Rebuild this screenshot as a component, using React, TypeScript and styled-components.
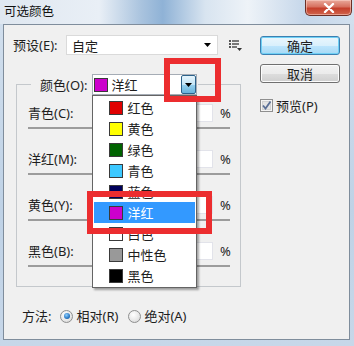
import React from 'react';
import styled, { createGlobalStyle } from 'styled-components';

const GlobalStyle = createGlobalStyle`
    html, body {
        margin: 0;
        padding: 0;
        width: 354px;
        height: 346px;
        overflow: hidden;
    }
    body {
        font-family: "Noto Sans", "Noto Sans CJK SC", sans-serif;
        font-size: 13px;
        color: #1e1e1e;
    }
`;

const Window = styled.div`
    width: 354px;
    height: 346px;
    display: flex;
    flex-direction: column;
    background: linear-gradient(180deg, #d3e0ee 0%, #bfd2e6 60%, #c7d7e9 100%);
`;

const TitleBar = styled.div`
    height: 24px;
    display: flex;
    align-items: flex-start;
    background: linear-gradient(90deg, #dfe7f0 0%, #e9eff6 28%, #a9c3de 40%, #8fb2d6 46%, #d8e4f0 58%, #eef3f8 70%, #c6d7ea 86%, #d2e0ee 100%);
`;

const Title = styled.span`
    padding-left: 4px;
    line-height: 24px;
    font-size: 12.5px;
    color: #111;
`;

const CloseButton = styled.div`
    margin-left: auto;
    margin-right: 2px;
    width: 47px;
    height: 16px;
    box-sizing: border-box;
    border: 1px solid #6b2f26;
    border-top: none;
    border-radius: 0 0 5px 5px;
    background: linear-gradient(180deg, #e9a99b 0%, #d7715f 45%, #c53f2b 55%, #d0644c 100%);
    box-shadow: inset 0 0 0 1px rgba(255, 220, 210, 0.5);
    display: flex;
    align-items: center;
    justify-content: center;
`;

const Client = styled.div`
    flex: 1;
    margin: 0 4px 6px 3px;
    border: 1px solid #7f8d9c;
    background: #f0f0f0;
    display: flex;
    flex-direction: column;
`;

const Body = styled.div`
    display: flex;
`;

const Main = styled.div`
    width: 246px;
    display: flex;
    flex-direction: column;
`;

const Side = styled.div`
    margin-left: 10px;
    padding-top: 11px;
    display: flex;
    flex-direction: column;
`;

const PresetRow = styled.div`
    margin-top: 10px;
    height: 20px;
    padding-left: 9px;
    display: flex;
    align-items: center;
`;

const Label = styled.span<{ $w?: number }>`
    width: ${(p) => (p.$w ? `${p.$w}px` : 'auto')};
    flex-shrink: 0;
    white-space: nowrap;
    line-height: 20px;
`;

const PresetCombo = styled.div`
    width: 152px;
    height: 20px;
    box-sizing: border-box;
    border: 1px solid #dadada;
    background: #fff;
    display: flex;
    align-items: center;
    padding: 0 6px 0 5px;
`;

const ComboText = styled.span`
    flex: 1;
    white-space: nowrap;
`;

const MenuIcon = styled.div`
    margin-left: 11px;
    width: 13px;
    height: 11px;
    display: flex;
`;

const GroupBox = styled.fieldset`
    margin: 19px 0 0 12px;
    width: 225px;
    box-sizing: border-box;
    min-inline-size: 0;
    border: 1px solid #c4c8cc;
    padding: 8px 10px 19px 11px;
    display: flex;
    flex-direction: column;
    gap: 20px;
`;

const Legend = styled.legend`
    margin-left: 3px;
    padding: 0 1px 0 9px;
    height: 21px;
`;

const LegendInner = styled.div`
    display: flex;
    align-items: center;
    height: 21px;
`;

const ColorCombo = styled.div`
    position: relative;
    margin-left: 5px;
    width: 105px;
    height: 21px;
    box-sizing: border-box;
    border: 1px solid #a5acb5;
    background: #fff;
    display: flex;
    align-items: center;
    padding-left: 1px;
`;

const Swatch = styled.span<{ $color: string; $size?: number }>`
    width: ${(p) => p.$size ?? 14}px;
    height: ${(p) => p.$size ?? 14}px;
    box-sizing: border-box;
    flex-shrink: 0;
    background: ${(p) => p.$color};
    border: 1px solid #3a3a3a;
`;

const ComboValue = styled.span`
    margin-left: 3px;
    flex: 1;
    white-space: nowrap;
`;

const DropButton = styled.div`
    width: 15px;
    height: 19px;
    box-sizing: border-box;
    border: 1px solid #2c628b;
    border-radius: 2px;
    background: linear-gradient(180deg, #e5f4fc 0%, #c4e5f6 50%, #98d1ef 51%, #68b3db 100%);
    display: flex;
    align-items: center;
    justify-content: center;
`;

const DropList = styled.ul`
    position: absolute;
    left: -1px;
    top: 20px;
    width: 105px;
    box-sizing: border-box;
    margin: 0;
    padding: 1px 0 1px;
    list-style: none;
    background: #fff;
    border: 1px solid #646464;
    box-shadow: 2px 2px 2px rgba(0, 0, 0, 0.35);
    z-index: 2;
`;

const DropItem = styled.li<{ $active?: boolean }>`
    height: 21px;
    margin: 0 1px;
    padding-left: 15px;
    display: flex;
    align-items: center;
    gap: 4px;
    background: ${(p) => (p.$active ? '#3399ff' : 'transparent')};
    color: ${(p) => (p.$active ? '#fff' : '#1e1e1e')};
`;

const Marker = styled.div<{ $x: number; $y: number; $w: number; $h: number }>`
    position: absolute;
    left: ${(p) => p.$x}px;
    top: ${(p) => p.$y}px;
    width: ${(p) => p.$w}px;
    height: ${(p) => p.$h}px;
    box-sizing: border-box;
    border: 6px solid #ec2d2f;
    z-index: 3;
`;

const SliderRow = styled.div`
    display: flex;
    flex-direction: column;
`;

const SliderTop = styled.div`
    height: 20px;
    display: flex;
    align-items: center;
`;

const ValueBox = styled.div`
    width: 30px;
    height: 18px;
    box-sizing: border-box;
    border: 1px solid #e2e3ea;
    background: #fff;
`;

const Percent = styled.span`
    margin-left: 7px;
    width: 10px;
    text-align: right;
`;

const Track = styled.div`
    margin-top: 4px;
    height: 2px;
    background: #9c9c9c;
`;

const Button = styled.div<{ $default?: boolean }>`
    width: 80px;
    height: 19px;
    box-sizing: border-box;
    border-radius: 3px;
    display: flex;
    align-items: center;
    justify-content: center;
    border: 1px solid ${(p) => (p.$default ? '#3c7fb1' : '#707070')};
    background: ${(p) =>
        p.$default
            ? 'linear-gradient(180deg, #eaf6fd 0%, #d9f0fc 50%, #bee6fd 51%, #a7d9f5 100%)'
            : 'linear-gradient(180deg, #f2f2f2 0%, #ebebeb 50%, #dddddd 51%, #cfcfcf 100%)'};
    box-shadow: inset 0 0 0 1px ${(p) => (p.$default ? '#6fd0f5' : '#fcfcfc')};
    & + & {
        margin-top: 9px;
    }
`;

const CheckRow = styled.div`
    margin-top: 15px;
    height: 15px;
    display: flex;
    align-items: center;
    gap: 3px;
`;

const MethodRow = styled.div`
    margin-top: 19px;
    height: 20px;
    padding-left: 18px;
    display: flex;
    align-items: center;
`;

const Radio = styled.span<{ $checked?: boolean }>`
    width: 13px;
    height: 13px;
    box-sizing: border-box;
    border-radius: 50%;
    border: 1px solid #8e8f8f;
    background: radial-gradient(circle at 40% 35%, #ffffff 0%, #e6e6e6 60%, #cfcfcf 100%);
    display: inline-flex;
    align-items: center;
    justify-content: center;
    margin-left: ${(p) => (p.$checked ? 9 : 10)}px;
    margin-right: 3px;
    &::after {
        content: '';
        display: ${(p) => (p.$checked ? 'block' : 'none')};
        width: 6px;
        height: 6px;
        border-radius: 50%;
        background: radial-gradient(circle at 40% 35%, #8fd0ff 0%, #2a78c4 60%, #17466f 100%);
    }
`;

const CheckBox = () => (
    <svg width='13' height='13' viewBox='0 0 13 13'>
        <rect x='0.5' y='0.5' width='12' height='12' fill='#f4f4f4' stroke='#8f8f8f' />
        <rect x='2.5' y='2.5' width='8' height='8' fill='#e4e4e4' stroke='#d2d2d2' />
        <path d='M3 6.5 L5.5 9.5 L10.5 2.5' fill='none' stroke='#5a6f96' strokeWidth='1.8' />
    </svg>
);

const Arrow = () => (
    <svg width='7' height='4' viewBox='0 0 7 4'>
        <path d='M0 0 H7 L3.5 4 Z' fill='#000' />
    </svg>
);

const colors = [
    { name: '红色', color: '#e00000' },
    { name: '黄色', color: '#ffff00' },
    { name: '绿色', color: '#006300' },
    { name: '青色', color: '#3cc8ff' },
    { name: '蓝色', color: '#00005a' },
    { name: '洋红', color: '#cc00cc' },
    { name: '白色', color: '#ffffff' },
    { name: '中性色', color: '#999999' },
    { name: '黑色', color: '#000000' },
];

const sliders = ['青色(C):', '洋红(M):', '黄色(Y):', '黑色(B):'];

const App = () => {
    return (
        <>
            <GlobalStyle />
            <Window>
                <TitleBar>
                    <Title>可选颜色</Title>
                    <CloseButton>
                        <svg width='12' height='10' viewBox='0 0 12 10'>
                            <path d='M2 1 L10 9 M10 1 L2 9' stroke='#fff' strokeWidth='2.4' strokeLinecap='round' />
                        </svg>
                    </CloseButton>
                </TitleBar>
                <Client>
                    <Body>
                        <Main>
                            <PresetRow>
                                <Label $w={53}>预设(E):</Label>
                                <PresetCombo>
                                    <ComboText>自定</ComboText>
                                    <Arrow />
                                </PresetCombo>
                                <MenuIcon>
                                    <svg width='13' height='11' viewBox='0 0 13 11'>
                                        <rect x='0' y='0' width='2' height='2' fill='#555' />
                                        <rect x='3' y='0' width='7' height='2' fill='#777' />
                                        <rect x='0' y='3' width='2' height='2' fill='#555' />
                                        <rect x='3' y='3' width='7' height='2' fill='#777' />
                                        <rect x='0' y='6' width='2' height='2' fill='#555' />
                                        <rect x='3' y='6' width='5' height='2' fill='#777' />
                                        <path d='M8 8 H13 L10.5 11 Z' fill='#333' />
                                    </svg>
                                </MenuIcon>
                            </PresetRow>
                            <GroupBox>
                                <Legend>
                                    <LegendInner>
                                        <Label>颜色(O):</Label>
                                        <ColorCombo>
                                            <Swatch $color='#cc00cc' $size={14} />
                                            <ComboValue>洋红</ComboValue>
                                            <DropButton>
                                                <Arrow />
                                            </DropButton>
                                            <DropList>
                                                {colors.map((c) => (
                                                    <DropItem key={c.name} $active={c.name === '洋红'}>
                                                        <Swatch $color={c.color} />
                                                        {c.name}
                                                    </DropItem>
                                                ))}
                                            </DropList>
                                            <Marker $x={71} $y={-17} $w={57} $h={44} />
                                            <Marker $x={-6} $y={116} $w={125} $h={43} />
                                        </ColorCombo>
                                    </LegendInner>
                                </Legend>
                                {sliders.map((s) => (
                                    <SliderRow key={s}>
                                        <SliderTop>
                                            <Label style={{ flex: 1 }}>{s}</Label>
                                            <ValueBox />
                                            <Percent>%</Percent>
                                        </SliderTop>
                                        <Track />
                                    </SliderRow>
                                ))}
                            </GroupBox>
                        </Main>
                        <Side>
                            <Button $default>确定</Button>
                            <Button>取消</Button>
                            <CheckRow>
                                <CheckBox />
                                <span>预览(P)</span>
                            </CheckRow>
                        </Side>
                    </Body>
                    <MethodRow>
                        <Label>方法:</Label>
                        <Radio $checked />
                        <Label>相对(R)</Label>
                        <Radio />
                        <Label>绝对(A)</Label>
                    </MethodRow>
                </Client>
            </Window>
        </>
    );
};

export default App;
